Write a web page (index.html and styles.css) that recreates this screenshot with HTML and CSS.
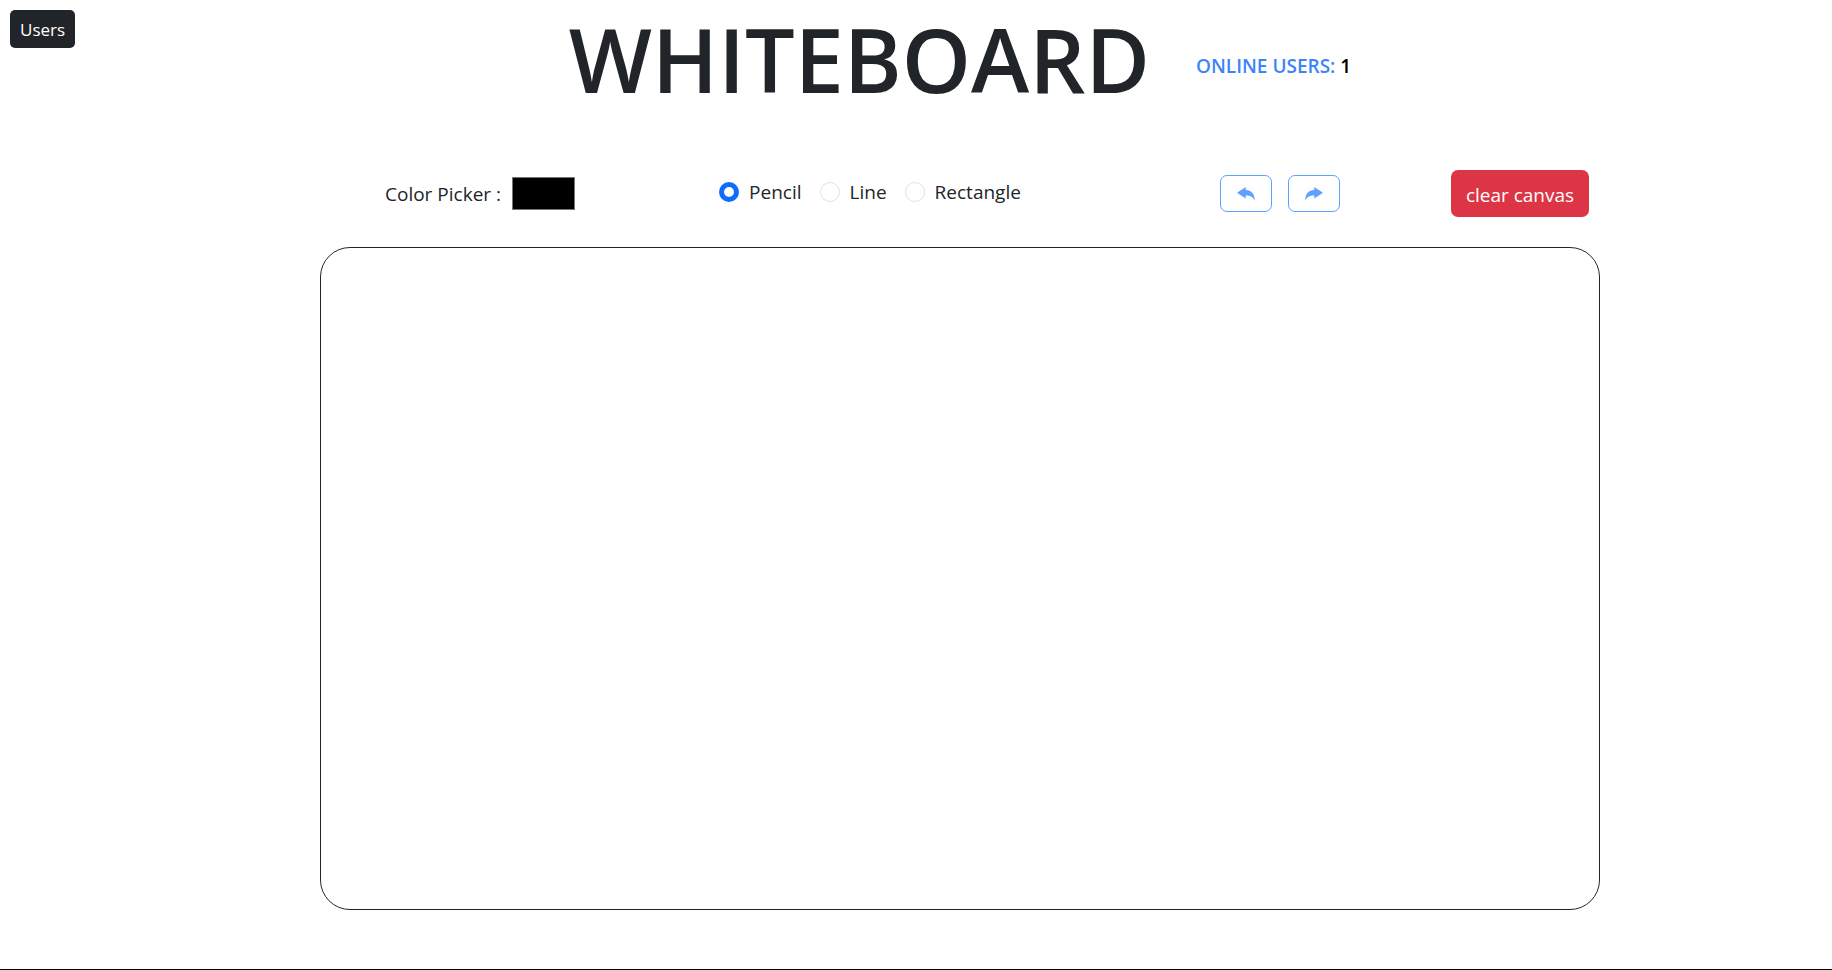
FILE: index.html
```
<!DOCTYPE html>
<html lang="en">
<head>
<meta charset="utf-8">
<title>Whiteboard</title>
<link rel="stylesheet" href="styles.css">
</head>
<body>
<div class="page">
  <button class="users-button" type="button">Users</button>
  <header class="header">
    <h1 class="title">WHITEBOARD</h1>
    <p class="online">ONLINE USERS: <span class="online-count">1</span></p>
  </header>
  <main class="board">
    <div class="toolbar">
      <div class="picker">
        <label for="color">Color Picker :</label>
        <input class="swatch" type="color" id="color" value="#000000">
      </div>
      <div class="tools">
        <label class="tool"><input class="radio" type="radio" name="tool" value="pencil" checked>Pencil</label>
        <label class="tool"><input class="radio" type="radio" name="tool" value="line">Line</label>
        <label class="tool"><input class="radio" type="radio" name="tool" value="rect">Rectangle</label>
      </div>
      <div class="history">
        <button class="history-button" type="button" aria-label="Undo"><svg class="icon" viewBox="0 0 18 14"><path d="M0 5.700 8.700 0v3.100C14.500 3.300 18 7 17.700 14 16.500 10 13 8.300 8.700 8.400v3.200Z"/></svg></button>
        <button class="history-button" type="button" aria-label="Redo"><svg class="icon" viewBox="0 0 18 14"><path d="M18 5.700 9.300 0v3.100C3.500 3.300 0 7 .3 14 1.500 10 5 8.300 9.300 8.400v3.200Z"/></svg></button>
      </div>
      <div class="clear">
        <button class="clear-button" type="button">clear canvas</button>
      </div>
    </div>
    <canvas class="canvas"></canvas>
  </main>
</div>
</body>
</html>
```
FILE: styles.css
```
* { box-sizing: border-box; }
body {
  margin: 0;
  background: #fff;
  color: #212529;
  font-family: "Segoe UI", "Open Sans", "Noto Sans", sans-serif;
  font-size: 19px;
  line-height: 30px;
}
button, input { font: inherit; margin: 0; }
.page {
  display: flex;
  flex-direction: column;
  min-height: 100vh;
  padding-left: 88px;
  border-bottom: 1px solid #000;
}
.users-button {
  position: absolute;
  top: 10px;
  left: 10px;
  height: 38px;
  padding: 1px 10px 0;
  border: 0;
  border-radius: 5px;
  background: #212529;
  color: #fff;
  font-size: 17px;
}
.header {
  display: flex;
  justify-content: center;
  align-items: center;
  gap: 46px;
  padding-top: 5px;
}
.title {
  margin: 0;
  font-size: 88px;
  font-weight: 600;
  line-height: 108px;
}
.online {
  margin: 0;
  padding-top: 14px;
  color: #3d83f9;
  font-weight: 600;
}
.online-count { color: #000; }
.board {
  display: flex;
  flex-direction: column;
  flex: 1;
  gap: 30px;
  width: 100%;
  max-width: 1280px;
  margin: 0 auto;
  padding: 57px 0 59px;
}
.toolbar {
  display: grid;
  grid-template-columns: 2fr 3fr 2fr 1fr;
  align-items: center;
}
.picker, .tools, .history, .clear {
  display: flex;
  align-items: center;
  justify-content: center;
}
.picker { gap: 11px; }
.swatch {
  width: 63px;
  height: 33px;
  padding: 0;
  border: 1px solid #767676;
  background: #000;
}
.swatch::-webkit-color-swatch-wrapper { padding: 0; }
.swatch::-webkit-color-swatch { border: 0; }
.tools { gap: 18px; padding: 0 20px 3px 0; }
.tool { display: flex; align-items: center; gap: 10px; }
.radio {
  appearance: none;
  width: 20px;
  height: 20px;
  border: 1px solid #dee2e6;
  border-radius: 50%;
  background: #fff;
}
.radio:checked { border: 5px solid #0d6efd; }
.history { gap: 16px; }
.history-button {
  display: flex;
  align-items: center;
  justify-content: center;
  width: 52px;
  height: 37px;
  padding: 0;
  border: 1px solid #60a0ff;
  border-radius: 7px;
  background: #fff;
}
.icon { width: 18px; height: 14px; fill: #60a0ff; }
.clear-button {
  height: 47px;
  padding: 2px 15px 0;
  border: 0;
  border-radius: 7px;
  background: #dc3545;
  color: #fff;
  white-space: nowrap;
}
.canvas {
  flex: 1;
  width: 100%;
  min-height: 0;
  border: 1px solid #212529;
  border-radius: 30px;
}
```
